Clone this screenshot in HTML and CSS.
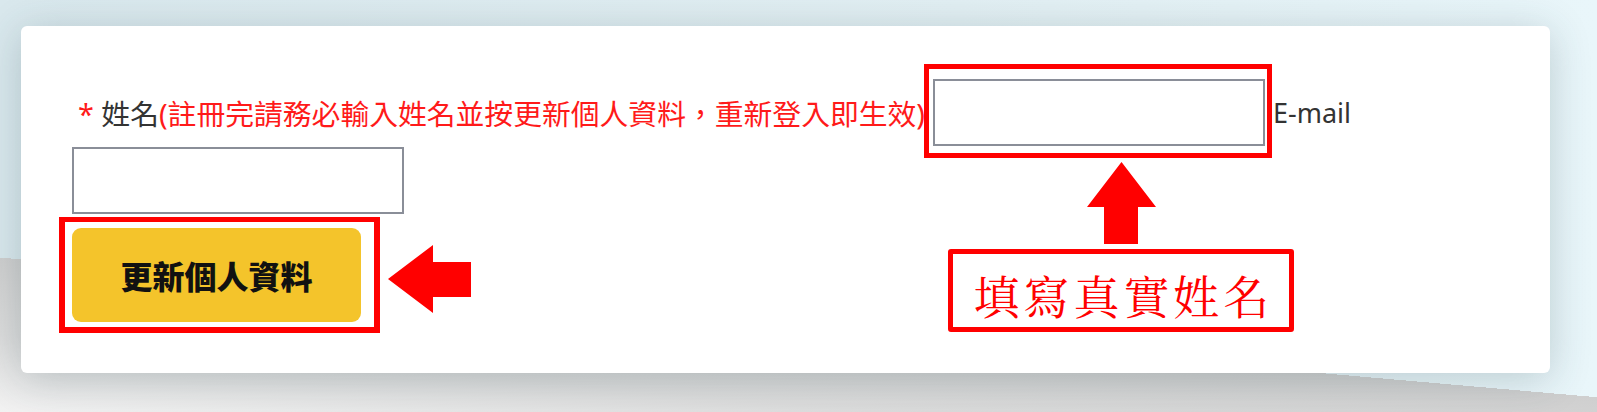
FILE: index.html
```html
<!DOCTYPE html>
<html lang="zh-Hant">

<head>
    <meta charset="UTF-8">
    <meta name="viewport" content="width=device-width, initial-scale=1.0">
    <title>個人資料</title>
    <link rel="stylesheet" href="styles.css">
</head>

<body>
    <div class="profile-card">
        <form class="profile-form" onsubmit="event.preventDefault()">
            <div class="field-row">
                <label class="field-label"><span class="required">*</span> 姓名<span class="hint">(註冊完請務必輸入姓名並按更新個人資料，重新登入即生效)</span></label>
                <div class="mark-box mark-input"><input type="text" name="name"></div>
                <label class="field-label email-label">E-mail</label>
                <input type="text" name="email">
            </div>
            <div class="mark-box mark-button">
                <button type="submit" class="update-btn">更新個人資料</button>
            </div>
        </form>

        <!-- annotations drawn over the form -->
        <svg class="arrow arrow-left" width="83" height="68" viewBox="0 0 83 68">
            <polygon points="0,34 45,0 45,17 83,17 83,52 45,52 45,68" fill="#ff0000" />
        </svg>
        <svg class="arrow arrow-up" width="69" height="82" viewBox="0 0 69 82">
            <polygon points="34.5,0 69,45 51,45 51,82 17,82 17,45 0,45" fill="#ff0000" />
        </svg>
        <div class="note">填寫真實姓名</div>
    </div>
</body>

</html>
```

FILE: styles.css
```css
html, body {
    height: 100%;
}

body {
    margin: 0;
    overflow: hidden;
    font-family: "Noto Sans", "Noto Sans CJK TC", sans-serif;
    background:
        linear-gradient(185deg, transparent 72%, #cfcfcf 72%, #dcdcdc 86%, #f2f2f2 100%),
        linear-gradient(90deg, #d9e8ed, #e2eff3 60%, #e9f6fa);
}

.profile-card {
    position: relative;
    width: 1529px;
    box-sizing: border-box;
    margin: 26px 0 0 21px;
    padding: 53px 51px 51px 51px;
    background: #fff;
    border-radius: 6px;
    box-shadow: 0 6px 40px rgba(40, 70, 80, 0.24);
}

.field-row {
    display: flex;
    flex-wrap: wrap;
    align-items: center;
    column-gap: 8px;
    row-gap: 1px;
}

.field-label {
    font-size: 28.8px;
    color: #333;
    padding-left: 6px;
}

.email-label {
    padding-left: 0;
    font-size: 27px;
}

.required {
    color: #ff1a1a;
}

.hint {
    color: #ff1a1a;
}

input {
    width: 332px;
    height: 67px;
    box-sizing: border-box;
    border: 2px solid #8a8e98;
    border-radius: 0;
    padding: 0 10px;
    font-size: 24px;
    background: #fff;
}

.mark-box {
    position: relative;
    display: flex;
    width: max-content;
}

.mark-box::after {
    content: "";
    position: absolute;
    border: 5px solid #ff0000;
    pointer-events: none;
}

.mark-input::after {
    top: -15px;
    right: -7px;
    bottom: -12px;
    left: -9px;
}

.mark-button {
    margin-top: 14px;
}

.mark-button::after {
    top: -11px;
    right: -19px;
    bottom: -11px;
    left: -13px;
    border-width: 5px 6px 6px 6px;
}

.update-btn {
    width: 289px;
    height: 94px;
    border: none;
    border-radius: 9px;
    background: #f4c42b;
    color: #111;
    font-family: "Noto Sans CJK TC", sans-serif;
    font-size: 32px;
    font-weight: 900;
    cursor: pointer;
}

.arrow {
    position: absolute;
}

.arrow-left {
    left: 367px;
    top: 219px;
}

.arrow-up {
    left: 1066px;
    top: 136px;
}

.note {
    position: absolute;
    left: 927px;
    top: 223px;
    width: 346px;
    height: 83px;
    box-sizing: border-box;
    display: flex;
    align-items: center;
    justify-content: center;
    padding-left: 5px;
    padding-top: 6px;
    border: 5px solid #ff0000;
    border-radius: 3px;
    background: #fff;
    color: #ff0000;
    font-family: "Noto Serif CJK TC", "AR PL UMing TW", "Noto Sans CJK TC", serif;
    font-size: 46px;
    letter-spacing: 4px;
}
```
